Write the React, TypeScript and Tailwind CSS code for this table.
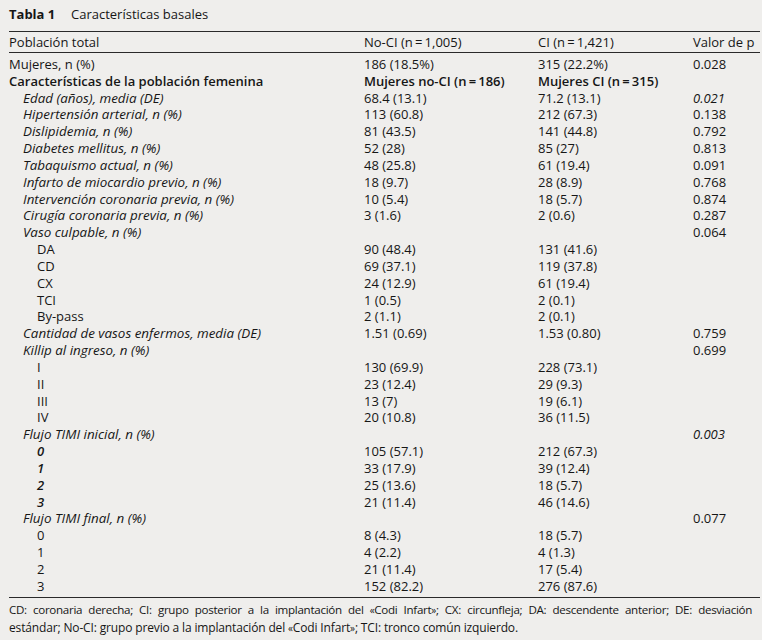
import React from "react";

type Row = {
  label: string;
  a?: string;
  b?: string;
  p?: string;
  kind?: "plain" | "bold" | "ital" | "sub" | "subital";
  pItal?: boolean;
};

const T = "\u2009";

const rows: Row[] = [
  { label: "Mujeres, n (%)", a: "186 (18.5%)", b: "315 (22.2%)", p: "0.028", kind: "plain" },
  {
    label: "Características de la población femenina",
    a: `Mujeres no-CI (n${T}=${T}186)`,
    b: `Mujeres CI (n${T}=${T}315)`,
    kind: "bold",
  },
  { label: "Edad (años), media (DE)", a: "68.4 (13.1)", b: "71.2 (13.1)", p: "0.021", kind: "ital", pItal: true },
  { label: "Hipertensión arterial, n (%)", a: "113 (60.8)", b: "212 (67.3)", p: "0.138", kind: "ital" },
  { label: "Dislipidemia, n (%)", a: "81 (43.5)", b: "141 (44.8)", p: "0.792", kind: "ital" },
  { label: "Diabetes mellitus, n (%)", a: "52 (28)", b: "85 (27)", p: "0.813", kind: "ital" },
  { label: "Tabaquismo actual, n (%)", a: "48 (25.8)", b: "61 (19.4)", p: "0.091", kind: "ital" },
  { label: "Infarto de miocardio previo, n (%)", a: "18 (9.7)", b: "28 (8.9)", p: "0.768", kind: "ital" },
  { label: "Intervención coronaria previa, n (%)", a: "10 (5.4)", b: "18 (5.7)", p: "0.874", kind: "ital" },
  { label: "Cirugía coronaria previa, n (%)", a: "3 (1.6)", b: "2 (0.6)", p: "0.287", kind: "ital" },
  { label: "Vaso culpable, n (%)", p: "0.064", kind: "ital" },
  { label: "DA", a: "90 (48.4)", b: "131 (41.6)", kind: "sub" },
  { label: "CD", a: "69 (37.1)", b: "119 (37.8)", kind: "sub" },
  { label: "CX", a: "24 (12.9)", b: "61 (19.4)", kind: "sub" },
  { label: "TCI", a: "1 (0.5)", b: "2 (0.1)", kind: "sub" },
  { label: "By-pass", a: "2 (1.1)", b: "2 (0.1)", kind: "sub" },
  { label: "Cantidad de vasos enfermos, media (DE)", a: "1.51 (0.69)", b: "1.53 (0.80)", p: "0.759", kind: "ital" },
  { label: "Killip al ingreso, n (%)", p: "0.699", kind: "ital" },
  { label: "I", a: "130 (69.9)", b: "228 (73.1)", kind: "sub" },
  { label: "II", a: "23 (12.4)", b: "29 (9.3)", kind: "sub" },
  { label: "III", a: "13 (7)", b: "19 (6.1)", kind: "sub" },
  { label: "IV", a: "20 (10.8)", b: "36 (11.5)", kind: "sub" },
  { label: "Flujo TIMI inicial, n (%)", p: "0.003", kind: "ital", pItal: true },
  { label: "0", a: "105 (57.1)", b: "212 (67.3)", kind: "subital" },
  { label: "1", a: "33 (17.9)", b: "39 (12.4)", kind: "subital" },
  { label: "2", a: "25 (13.6)", b: "18 (5.7)", kind: "subital" },
  { label: "3", a: "21 (11.4)", b: "46 (14.6)", kind: "subital" },
  { label: "Flujo TIMI final, n (%)", p: "0.077", kind: "ital" },
  { label: "0", a: "8 (4.3)", b: "18 (5.7)", kind: "sub" },
  { label: "1", a: "4 (2.2)", b: "4 (1.3)", kind: "sub" },
  { label: "2", a: "21 (11.4)", b: "17 (5.4)", kind: "sub" },
  { label: "3", a: "152 (82.2)", b: "276 (87.6)", kind: "sub" },
];

const cols = "grid grid-cols-[355px_174px_155px_1fr]";

function labelClass(kind: Row["kind"]) {
  switch (kind) {
    case "bold":
      return "font-semibold";
    case "ital":
      return "italic text-[13.4px] pl-[14px]";
    case "sub":
      return "pl-[28px]";
    case "subital":
      return "italic font-semibold pl-[28px]";
    default:
      return "";
  }
}

export default function App() {
  return (
    <div
      className="w-[762px] bg-[#efeeec] text-[#161616] text-[13px] font-medium pl-[9px] pr-[2px] pb-[7px]"
      style={{ fontFamily: '"Open Sans", "Liberation Sans", sans-serif' }}
    >
      <div className="pt-[5px] pb-[8px] leading-[18px] border-b border-[#2a2a2a] flex">
        <span className="font-bold w-[62px]">Tabla 1</span>
        <span>Características basales</span>
      </div>

      <div className={`${cols} pt-[2px] pb-[1px] leading-[17px] border-b border-[#2a2a2a]`}>
        <div>Población total</div>
        <div>No-CI (n{T}={T}1,005)</div>
        <div>CI (n{T}={T}1,421)</div>
        <div>Valor de p</div>
      </div>

      <div className="pt-[3px] pb-[2px] border-b border-[#2a2a2a]">
        {rows.map((r, i) => (
          <div key={i} className={`${cols} h-[16.84px] leading-[16.84px] whitespace-nowrap`}>
            <div className={labelClass(r.kind)}>{r.label}</div>
            <div className={r.kind === "bold" ? "font-semibold" : ""}>{r.a ?? ""}</div>
            <div className={r.kind === "bold" ? "font-semibold" : ""}>{r.b ?? ""}</div>
            <div className={r.pItal ? "italic" : ""}>{r.p ?? ""}</div>
          </div>
        ))}
      </div>

      <div className="pt-[3px] leading-[17px] text-[12px] pr-[8px]">
        <div className="whitespace-nowrap text-justify [text-align-last:justify] text-[11.6px] tracking-[-0.3px]">
          CD: coronaria derecha; CI: grupo posterior a la implantación del <span className="text-[10px]">«</span>Codi
          Infart<span className="text-[10px]">»</span>; CX: circunfleja; DA: descendente anterior; DE: desviación
        </div>
        <div className="whitespace-nowrap tracking-[-0.15px]">
          estándar; No-CI: grupo previo a la implantación del <span className="text-[10px]">«</span>Codi Infart
          <span className="text-[10px]">»</span>; TCI: tronco común izquierdo.
        </div>
      </div>
    </div>
  );
}
